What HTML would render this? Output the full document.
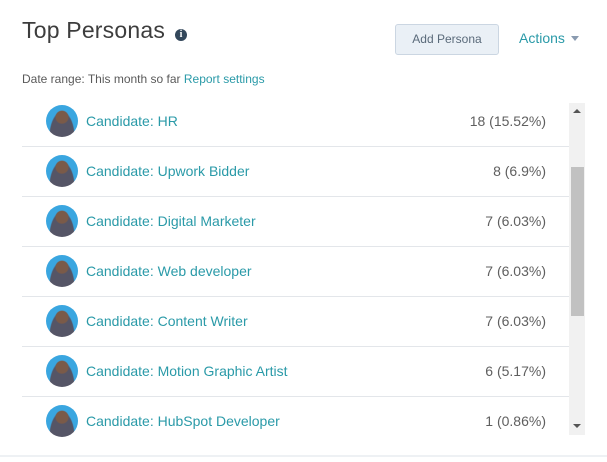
<!DOCTYPE html>
<html><head><style>
body{margin:0;width:607px;height:462px;background:#fff;font-family:"Liberation Sans",sans-serif;position:relative;overflow:hidden}
.t{position:absolute;left:22px;top:17px;font-size:23px;color:#3d3d3d;font-weight:300;letter-spacing:.2px}
.i{position:absolute;left:175px;top:29px;width:12px;height:12px;border-radius:50%;background:#33475b;color:#fff;font-size:10px;font-weight:bold;text-align:center;line-height:12px;font-family:"Liberation Serif",serif}
.btn{position:absolute;left:395px;top:24px;width:102px;height:29px;border:1px solid #cbd6e2;background:#eaf0f6;border-radius:3px;font-size:12px;color:#5a6a7a;text-align:center;line-height:29px}
.act{position:absolute;left:519px;top:30px;font-size:14px;color:#2a9aa8}
.act:after{content:"";display:inline-block;margin-left:6px;border:4px solid transparent;border-top:5px solid #8a9bb0;vertical-align:-2px}
.d{position:absolute;left:22px;top:72px;font-size:12px;color:#5a5a5a}
.d span{color:#2a9aa8}
.row{position:absolute;left:22px;width:548px;height:50px;border-bottom:1px solid #e3e6ea}
.av{position:absolute;left:24px;top:9px;width:32px;height:32px;border-radius:50%;background:radial-gradient(circle at 50% 38%,#7a5a48 0 6px,transparent 7px),radial-gradient(ellipse at 50% 100%,#556 0 12px,transparent 13px),#3aa6e0}
.n{position:absolute;left:64px;top:17px;font-size:14px;color:#2a9aa8}
.v{position:absolute;right:24px;top:17px;font-size:14px;color:#5f5f5f}
.sb{position:absolute;left:569px;top:103px;width:16px;height:332px;background:#f1f1f1}
.th{position:absolute;left:571px;top:167px;width:13px;height:149px;background:#c1c1c1}
.bt{position:absolute;left:0;right:0;top:455px;height:2px;background:#eef1f4}
</style></head><body>
<div class="t">Top Personas</div><div class="i">i</div>
<div class="btn">Add Persona</div>
<div class="act">Actions</div>
<div class="d">Date range: This month so far <span>Report settings</span></div>
<div class="row" style="top:96px"><div class="av"></div><div class="n">Candidate: HR</div><div class="v">18 (15.52%)</div></div>
<div class="row" style="top:146px"><div class="av"></div><div class="n">Candidate: Upwork Bidder</div><div class="v">8 (6.9%)</div></div>
<div class="row" style="top:196px"><div class="av"></div><div class="n">Candidate: Digital Marketer</div><div class="v">7 (6.03%)</div></div>
<div class="row" style="top:246px"><div class="av"></div><div class="n">Candidate: Web developer</div><div class="v">7 (6.03%)</div></div>
<div class="row" style="top:296px"><div class="av"></div><div class="n">Candidate: Content Writer</div><div class="v">7 (6.03%)</div></div>
<div class="row" style="top:346px"><div class="av"></div><div class="n">Candidate: Motion Graphic Artist</div><div class="v">6 (5.17%)</div></div>
<div class="row" style="top:396px;border:none"><div class="av"></div><div class="n">Candidate: HubSpot Developer</div><div class="v">1 (0.86%)</div></div>
<div class="sb"></div><div class="th"></div>
<div style="position:absolute;left:573px;top:109px;border:4px solid transparent;border-bottom:4px solid #555;border-top:0"></div>
<div style="position:absolute;left:573px;top:424px;border:4px solid transparent;border-top:4px solid #555;border-bottom:0"></div>
<div class="bt"></div>
</body></html>
